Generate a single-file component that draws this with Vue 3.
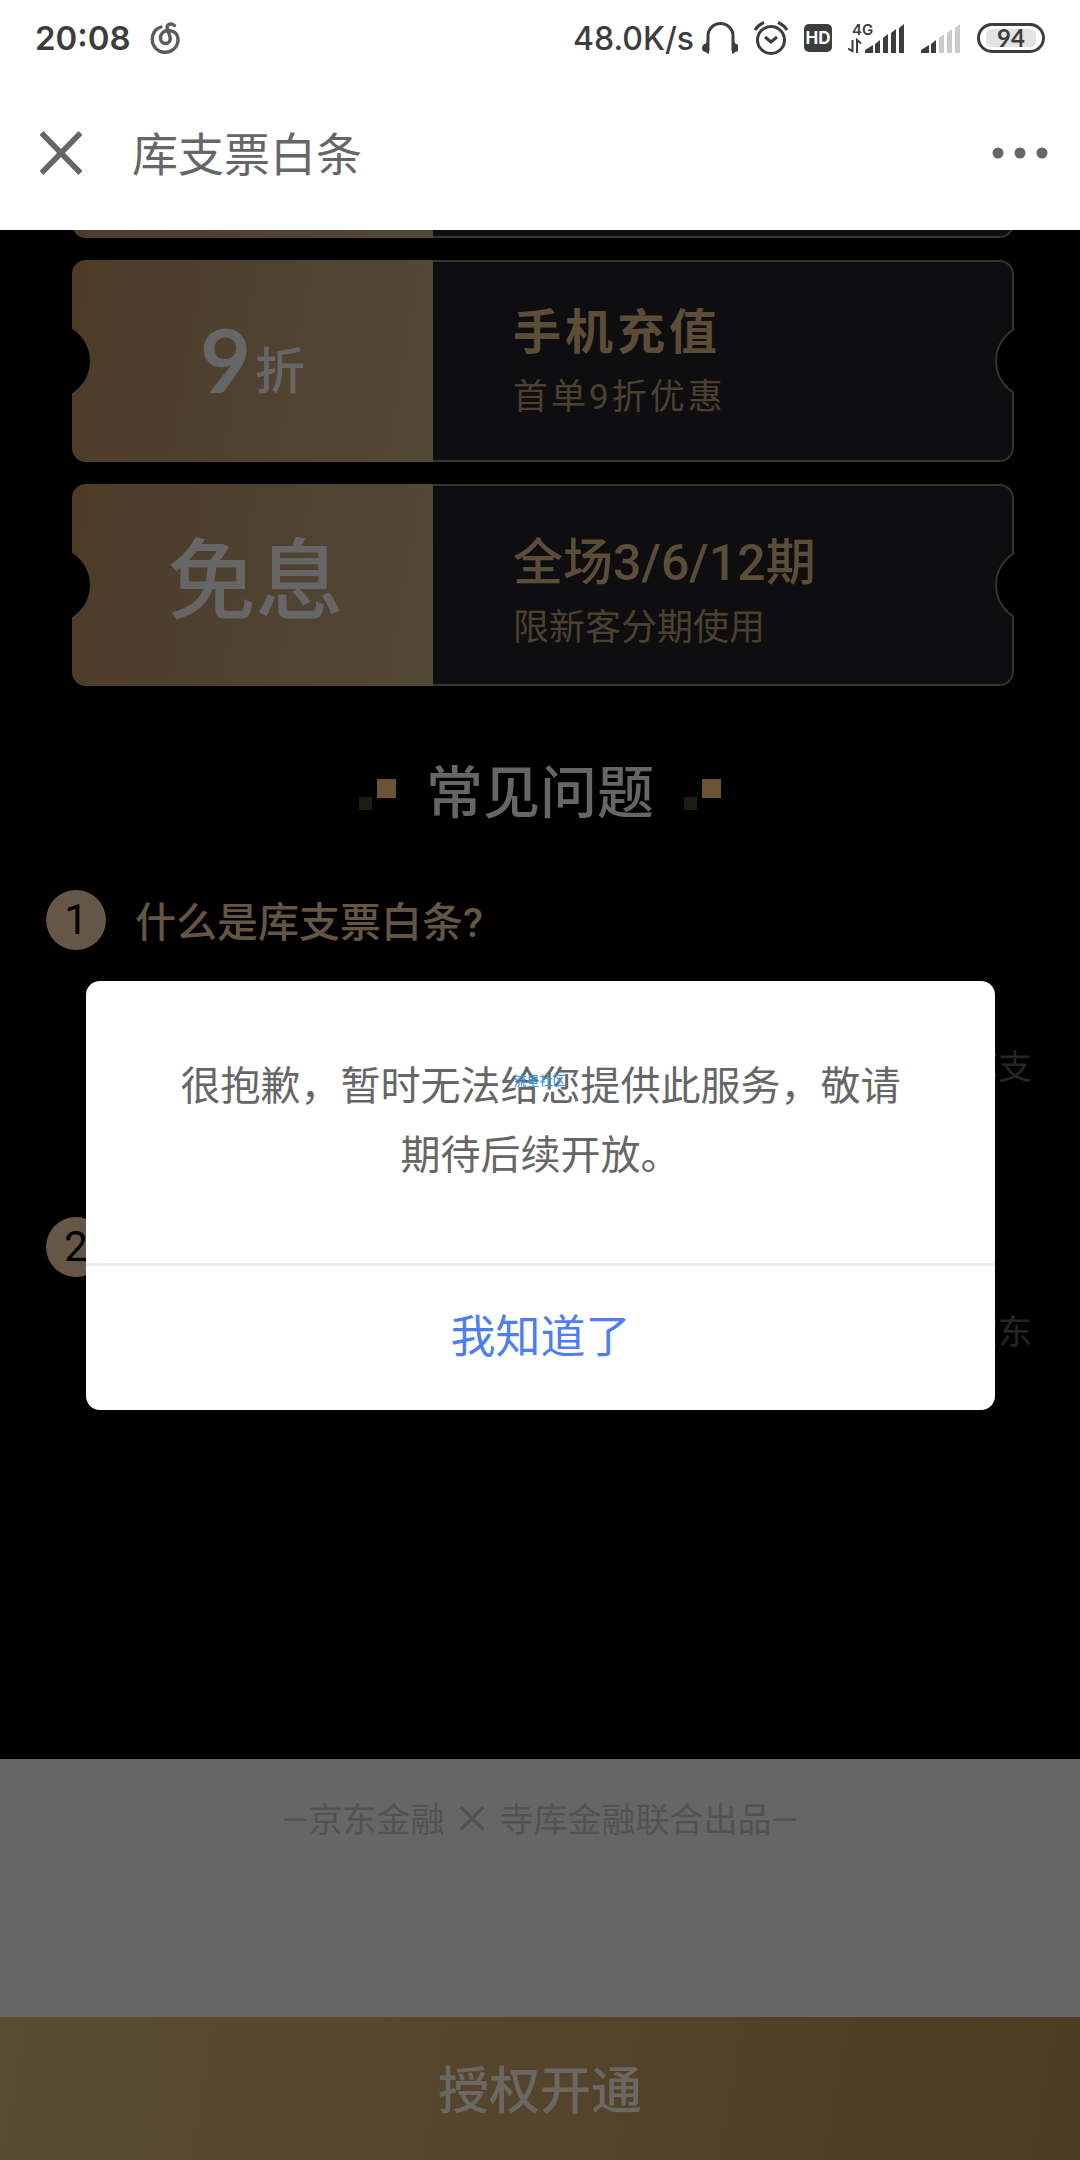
<script setup>
const tickets = [
  { amount: '', unit: '', big: '', title: '', note: '', kind: 'above' },
  { amount: '9', unit: '折', big: '', title: '手机充值', note: '首单9折优惠', kind: 'spaced' },
  { amount: '', unit: '', big: '免息', title: '全场3/6/12期', note: '限新客分期使用', kind: 'plain' },
]
const faqs = [
  { no: 1, question: '什么是库支票白条?', lines: ['', '库支', ''] },
  { no: 2, question: '', lines: ['京东'] },
]
const bars = [
  'M0 29v-3l8-5v8z',
  'M10 29V20l5-4v13z',
  'M18 29V14l5-4v19z',
  'M26 29V9l5-4v24z',
  'M34 29V4l5-4v29z',
]
</script>

<template>
  <div class="page">
    <header class="top">
      <div class="status">
        <span class="clock">20:08</span>
        <svg class="music" width="30" height="34" viewBox="0 0 30 34" fill="none" stroke="#5c5c5c" stroke-width="3.4" stroke-linecap="round">
          <path d="M11 6C5 8 2.300 13 2.300 18.500A12.800 12.500 0 0 0 28 19C28 12 23 9.500 18.500 9.500C13 9.500 10.500 13.500 10.500 17C10.500 20.500 13 22.500 15.500 22.500C19 22.500 21 19.500 20 16L17.300 7.500C16.500 3.500 20.500 1.500 24.500 4.500" />
        </svg>
        <div class="tray">
          <span class="speed">48.0K/s</span>
          <svg width="36" height="32" viewBox="0 0 36 32">
            <path d="M6 29V14a12.500 12.500 0 0 1 25 0v15" fill="none" stroke="#3d3d3d" stroke-width="3" />
            <path d="M7 20v11.500H4.500V30C1.500 30 0 28.500 0 26s1.500-4 4-4.500V20zM30 20v11.500h2.500V30c3 0 4.500-1.500 4.500-4s-1.500-4-4-4.500V20z" fill="#3d3d3d" />
          </svg>
          <svg width="34" height="34" viewBox="0 0 34 34" fill="none" stroke="#3d3d3d" stroke-width="3">
            <circle cx="17" cy="19" r="13.500" />
            <path d="M11 16l6 5 6-5M1 9Q4 4 10 1.500M33 9Q30 4 24 1.500" />
          </svg>
          <span class="hd">HD</span>
          <svg width="57" height="38" viewBox="0 -4 57 38">
            <text x="4" y="12" font-size="15" font-weight="600" fill="#3d3d3d">4G</text>
            <path d="M4.500 17v11L0 25.500M9 30V17l4 3.500" fill="none" stroke="#3d3d3d" stroke-width="2" />
            <g transform="translate(17 1)" fill="#3d3d3d">
              <path v-for="d in bars" :key="d" :d="d" />
            </g>
          </svg>
          <svg width="40" height="32" viewBox="0 0 40 32">
            <g transform="translate(0 2)">
              <path v-for="(d, i) in bars" :key="d" :d="d" :fill="i < 2 ? '#3d3d3d' : '#cacaca'" />
            </g>
          </svg>
          <span class="battery"><span class="level">94</span></span>
        </div>
      </div>
      <div class="bar">
        <button class="icon" type="button" aria-label="关闭">
          <svg width="42" height="44" viewBox="0 0 42 44"><path d="M1.500 2l39 40M40.500 2l-39 40" stroke="#666" stroke-width="5.500" /></svg>
        </button>
        <h1>库支票白条</h1>
        <button class="icon more" type="button" aria-label="更多">
          <svg width="56" height="12" viewBox="0 0 56 12" fill="#666"><circle cx="6" cy="6" r="5.500" /><circle cx="28" cy="6" r="5.500" /><circle cx="50" cy="6" r="5.500" /></svg>
        </button>
      </div>
    </header>

    <div class="view">
      <main>
        <section class="tickets">
          <article v-for="t in tickets" :key="t.kind" class="ticket" :class="t.kind">
            <div class="value">
              <span v-if="t.amount" class="amount">{{ t.amount }}</span>
              <span v-if="t.unit" class="unit">{{ t.unit }}</span>
              <strong v-if="t.big">{{ t.big }}</strong>
            </div>
            <div class="info">
              <h2>{{ t.title }}</h2>
              <p>{{ t.note }}</p>
            </div>
          </article>
        </section>

        <div class="heading">
          <span class="dots"><i class="small"></i><i></i></span>
          <h2>常见问题</h2>
          <span class="dots"><i class="small"></i><i></i></span>
        </div>

        <section class="faq">
          <article v-for="f in faqs" :key="f.no">
            <h3><span class="no">{{ f.no }}</span><span class="question">{{ f.question }}</span></h3>
            <p v-for="(l, i) in f.lines" :key="i">{{ l }}</p>
          </article>
        </section>
      </main>

      <p class="credit">—京东金融 <span>×</span> 寺库金融联合出品—</p>
      <button class="cta" type="button">授权开通</button>

      <div class="overlay">
        <div class="dialog" role="dialog" aria-modal="true">
          <p>很抱歉，暂时无法给您提供此服务，敬请期待后续开放。</p>
          <button type="button">我知道了</button>
          <span class="mark">流星社区</span>
        </div>
      </div>
    </div>
  </div>
</template>

<style>
body { margin: 0; background: #666; }
</style>

<style scoped>
*, *::before, *::after { box-sizing: border-box; }
h1, h2, h3, p { margin: 0; font-weight: 400; }
button { border: 0; padding: 0; background: none; font-family: inherit; cursor: pointer; }
svg { display: block; flex: none; }
.page {
  display: flex; flex-direction: column; min-height: 100vh;
  font-family: "Noto Sans CJK SC", "Noto Sans", sans-serif;
}
.top { background: #fff; }
.status {
  display: flex; align-items: center; height: 76px; padding: 0 35px;
  color: #3d3d3d; font-family: Inter, "Noto Sans", sans-serif;
}
.clock { font-size: 33px; font-weight: 600; }
.music { margin-left: 19px; }
.tray { display: flex; align-items: center; gap: 16px; margin-left: auto; }
.speed { margin-right: -8px; font-size: 32px; font-weight: 500; }
.hd {
  width: 28px; height: 28px; border-radius: 5px; background: #3d3d3d; color: #fff;
  font-size: 17px; font-weight: 700; line-height: 29px; text-align: center;
}
.battery { width: 68px; height: 30px; padding: 3px 6px; border: 3px solid #3d3d3d; border-radius: 15px; }
.level {
  display: block; height: 18px; border-radius: 6px; background: #e3e3e3;
  font-family: Lato, sans-serif; font-size: 24px; font-weight: 700; line-height: 18px; text-align: center;
}
.bar { display: flex; align-items: center; height: 154px; padding: 0 32px 0 40px; }
.bar h1 { margin-left: 50px; padding-bottom: 5px; color: #666; font-size: 46px; line-height: 60px; }
.more { margin-left: auto; }

.view { position: relative; display: flex; flex: 1; flex-direction: column; }
main { flex: 1; overflow: hidden; background: #000; }
.tickets { display: flex; flex-direction: column; gap: 22px; margin-top: -194px; padding: 0 66px 0 72px; }
.ticket { position: relative; display: flex; height: 202px; overflow: hidden; border-radius: 14px; }
.ticket::before, .ticket::after {
  position: absolute; top: 63px; width: 76px; height: 76px; border-radius: 50%; background: #000; content: "";
}
.ticket::before { left: -58px; }
.ticket::after { right: -57px; border: 2px solid #3a332a; }
.value {
  display: flex; justify-content: center; align-items: flex-start; gap: 4px; width: 361px;
  background: linear-gradient(100deg, #4d3b27, #4f4130 45%, #534737); color: #666;
}
.amount { font-family: Lato, sans-serif; font-size: 88px; font-weight: 700; line-height: 198px; }
.unit { font-size: 50px; font-weight: 500; line-height: 214px; }
.value strong { padding-left: 6px; font-size: 88px; font-weight: 500; line-height: 180px; }
.info {
  flex: 1; padding: 36px 0 0 80px; border: 2px solid #3a332a; border-left: 0;
  border-radius: 0 14px 14px 0; background: #0e0e10; color: #5c4d39;
  font-family: Roboto, "Noto Sans CJK SC", sans-serif;
}
.info h2 { font-size: 50px; font-weight: 500; line-height: 70px; }
.info p { color: #4c402f; font-size: 36px; line-height: 60px; }
.spaced h2 { font-size: 48px; font-weight: 700; letter-spacing: 4px; }
.spaced p { font-size: 35px; letter-spacing: 3px; }
.plain .info { padding-top: 42px; }

.heading { display: flex; justify-content: center; align-items: center; gap: 30px; margin-top: 62px; }
.heading h2 { color: #666; font-size: 57px; font-weight: 500; line-height: 80px; }
.dots { display: flex; align-items: flex-end; gap: 5px; height: 44px; }
.dots i { width: 19px; height: 19px; margin-bottom: 12px; background: #6b5433; }
.dots .small { width: 13px; height: 13px; margin-bottom: 0; background: #211a10; }

.faq { display: flex; flex-direction: column; gap: 59px; margin-top: 62px; padding: 0 48px 0 46px; }
.faq h3 {
  display: flex; align-items: center; gap: 29px; height: 60px; margin-bottom: 22px;
  color: #655643; font-family: Roboto, "Noto Sans CJK SC", sans-serif;
}
.no {
  width: 60px; height: 60px; border-radius: 50%; background: #655747; color: #000;
  font-size: 42px; font-weight: 400; line-height: 60px; text-align: center;
}
.question { padding-bottom: 2px; font-size: 41px; font-weight: 500; }
.faq p { min-height: 62px; color: #262626; font-size: 34px; line-height: 62px; text-align: right; }

.credit {
  padding: 36px 0 172px; background: #666; color: #525252;
  font-family: Roboto, "Noto Sans CJK SC", sans-serif; font-size: 34px; line-height: 50px; text-align: center;
}
.credit span { font-family: "Noto Sans CJK SC", sans-serif; font-size: 38px; font-weight: 500; line-height: 1; }
.cta {
  height: 143px; padding-bottom: 4px; background: linear-gradient(100deg, #5a4d36, #54442b 50%, #4c3c22);
  color: #6b6762; font-size: 51px; font-weight: 500;
}

.overlay { position: absolute; inset: 0; display: flex; align-items: center; justify-content: center; padding: 0 85px 0 86px; }
.dialog { position: relative; width: 100%; overflow: hidden; border-radius: 14px; background: #fff; }
.dialog p {
  padding: 68px 86px 76px; border-bottom: 3px solid #eee; color: #666;
  font-size: 40px; line-height: 69px; text-align: center;
}
.dialog button { display: block; width: 100%; height: 144px; padding-bottom: 8px; color: #4d7ff0; font-size: 45px; }
.mark { position: absolute; top: 90px; left: 50%; margin-left: -27px; color: #3f9be8; font-size: 13px; font-weight: 500; line-height: 18px; }
</style>
